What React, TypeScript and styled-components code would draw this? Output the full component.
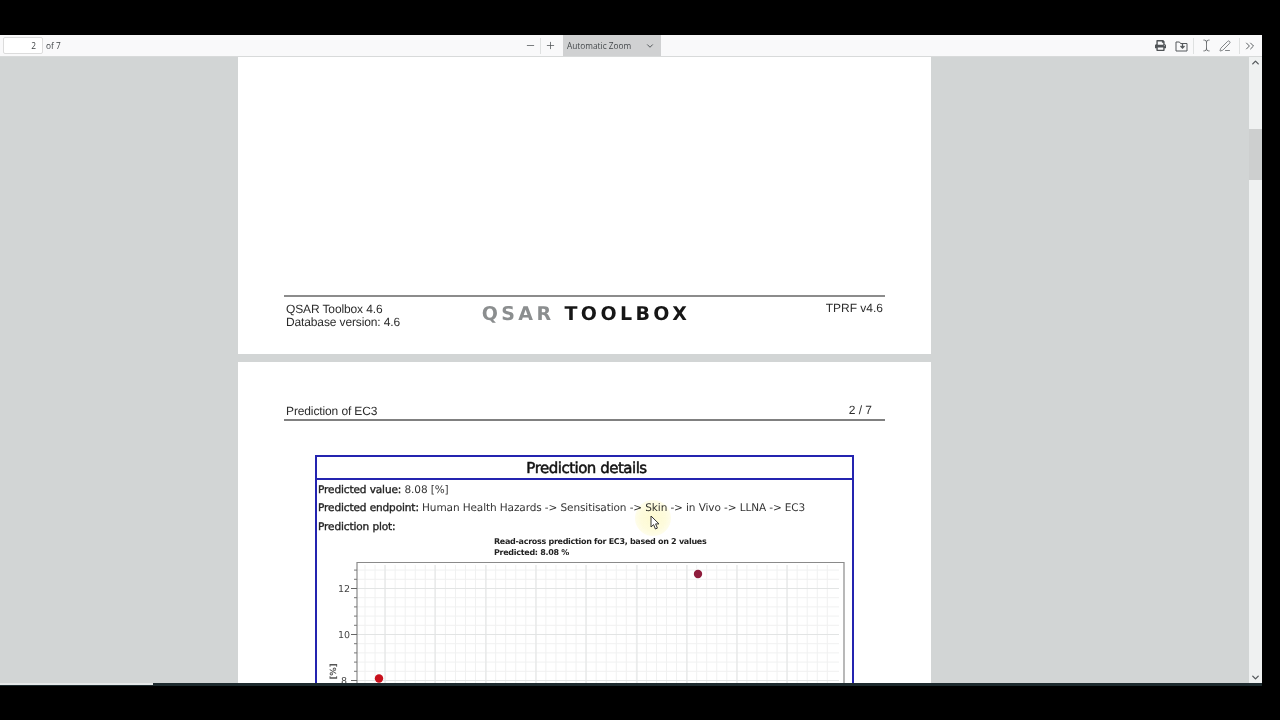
import React from 'react';
import styled, { createGlobalStyle } from 'styled-components';
import { ChevronDown, ChevronUp, ChevronsRight, Minus, PenLine, Plus, TextCursor } from 'lucide-react';
import { FaPrint } from 'react-icons/fa';

const GlobalStyle = createGlobalStyle`
  html, body {
    margin: 0;
    padding: 0;
    background: #000;
    overflow: hidden;
  }
`;

const range = (from: number, to: number, step: number) => {
  const out: number[] = [];
  for (let v = from; v <= to + 0.01; v += step) out.push(v);
  return out;
};

const Chart = () => (
  <ChartSvg viewBox="0 0 534 145" width="534" height="145">
    {range(48, 517, 10.05).map(x => (
      <line key={x} x1={x} x2={x} y1="4" y2="145" stroke="#f0f1f1" strokeWidth="1" />
    ))}
    {range(9.1, 145, 9.2).map(y => (
      <line key={y} x1="40" x2="522" y1={y} y2={y} stroke="#f0f1f1" strokeWidth="1" />
    ))}
    {[68, 118, 169, 219, 269, 320, 370, 420, 470].map(x => (
      <line key={x} x1={x} x2={x} y1="4" y2="145" stroke="#e2e4e4" strokeWidth="1" />
    ))}
    {[27.5, 73.5, 119.5].map(y => (
      <line key={y} x1="40" x2="522" y1={y} y2={y} stroke="#e2e4e4" strokeWidth="1" />
    ))}
    <path d="M40 145V1.500H527V145" fill="none" stroke="#8a8a8a" strokeWidth="1.2" />
    {range(9.1, 145, 9.2).map(y => (
      <line key={y} x1="37" x2="40" y1={y} y2={y} stroke="#777" strokeWidth="1" />
    ))}
    {[27.5, 73.5, 119.5].map(y => (
      <line key={y} x1="34" x2="40" y1={y} y2={y} stroke="#666" strokeWidth="1" />
    ))}
    <AxisText x="27" y="31" textAnchor="middle">12</AxisText>
    <AxisText x="27" y="77" textAnchor="middle">10</AxisText>
    <AxisText x="27" y="122.500" textAnchor="middle">8</AxisText>
    <AxisLabel transform="translate(19 139.500) rotate(-90)">EC3 [%]</AxisLabel>
    <circle cx="62" cy="117.500" r="4.2" fill="#c8101c" />
    <circle cx="381" cy="13" r="4.2" fill="#8e1c3c" />
  </ChartSvg>
);

const SaveIcon = () => (
  <svg width="13" height="12" viewBox="0 0 13 12" fill="none" stroke="#55595c" strokeWidth="1">
    <path d="M1 2h3.500l1 1.500H12V11H1z" />
    <path d="M7.500 3.500v4M5.500 6l2 2 2-2" strokeWidth="1.300" />
  </svg>
);

export default function App() {
  return (
    <>
      <GlobalStyle />
      <Screen>
        <TopBand />
        <Viewer>
          <Toolbar>
            <PagerGroup>
              <PageInput>2</PageInput>
              <PageCount>of 7</PageCount>
            </PagerGroup>
            <ZoomGroup>
              <ZoomButton><Minus size={11} strokeWidth={1.6} /></ZoomButton>
              <ToolDivider />
              <ZoomButton><Plus size={11} strokeWidth={1.6} /></ZoomButton>
              <ZoomSelect>
                Automatic Zoom
                <ChevronDown size={10} strokeWidth={2.4} color="#55595c" />
              </ZoomSelect>
            </ZoomGroup>
            <ToolsGroup>
              <ToolIcon><FaPrint size={11} /></ToolIcon>
              <ToolIcon $left={3}><SaveIcon /></ToolIcon>
              <ToolDivider $left={3} />
              <ToolIcon $left={3}><TextCursor size={13} strokeWidth={1.4} /></ToolIcon>
              <ToolIcon $left={1}><PenLine size={12} strokeWidth={1.4} /></ToolIcon>
              <ToolDivider $left={5} />
              <ToolIcon $left={1}><ChevronsRight size={14} strokeWidth={1.6} /></ToolIcon>
            </ToolsGroup>
          </Toolbar>
          <Workspace>
            <Pages>
              <FirstSheet>
                <SheetFooter>
                  <FooterInfo>
                    QSAR Toolbox 4.6
                    <br />
                    Database version: 4.6
                  </FooterInfo>
                  <Logo>
                    <LogoGrey>QSAR</LogoGrey> TOOLBOX
                  </Logo>
                  <FooterVersion>TPRF v4.6</FooterVersion>
                </SheetFooter>
              </FirstSheet>
              <SecondSheet>
                <SheetHeader>
                  <HeaderTitle>Prediction of EC3</HeaderTitle>
                  <PageNumber>2 / 7</PageNumber>
                </SheetHeader>
                <DetailsBox>
                  <DetailsTitle>Prediction details</DetailsTitle>
                  <DetailsBody>
                    <DetailRow>
                      <DetailKey>Predicted value:</DetailKey> 8.08 [%]
                    </DetailRow>
                    <DetailRow>
                      <DetailKey>Predicted endpoint:</DetailKey> Human Health Hazards -&gt; Sensitisation -&gt; Skin -&gt; in Vivo -&gt; LLNA -&gt; EC3
                    </DetailRow>
                    <DetailRow>
                      <DetailKey>Prediction plot:</DetailKey>
                    </DetailRow>
                    <ChartCaption>
                      Read-across prediction for EC3, based on 2 values
                      <br />
                      Predicted: 8.08 %
                    </ChartCaption>
                    <Chart />
                  </DetailsBody>
                </DetailsBox>
              </SecondSheet>
            </Pages>
            <ScrollTrack>
              <ChevronUp size={11} strokeWidth={3} color="#55595c" />
              <ScrollThumb />
              <ScrollRest />
              <ChevronDown size={11} strokeWidth={3} color="#55595c" />
            </ScrollTrack>
          </Workspace>
        </Viewer>
        <BottomEdge>
          <BottomLight />
        </BottomEdge>
        <Highlight />
        <Pointer width="11" height="15" viewBox="0 0 11 15">
          <path d="M1 1v11l2.600-2.400L5.400 14l2-.9-1.800-4.200H9z" fill="#fff" stroke="#333" strokeWidth="1" />
        </Pointer>
      </Screen>
    </>
  );
}

const Screen = styled.div`
  position: relative;
  width: 1280px;
  height: 720px;
  background: #000;
  overflow: hidden;
  filter: blur(0.35px);
`;

const TopBand = styled.div`
  height: 35px;
`;

const Viewer = styled.div`
  width: 1262px;
  height: 648px;
  display: flex;
  flex-direction: column;
  background: #d2d5d5;
`;

const Toolbar = styled.div`
  height: 22px;
  flex-shrink: 0;
  display: flex;
  align-items: center;
  background: #f9f9fa;
  border-bottom: 1px solid #d8dada;
  box-sizing: border-box;
  font-family: 'Open Sans', 'Liberation Sans', sans-serif;
  font-size: 8.300px;
  color: #3f4346;
`;

const PagerGroup = styled.div`
  width: 520px;
  flex-shrink: 0;
  display: flex;
  align-items: center;
  padding-left: 3px;
  box-sizing: border-box;
`;

const PageInput = styled.div`
  width: 40px;
  height: 17px;
  box-sizing: border-box;
  padding-right: 6px;
  background: #fff;
  border: 1px solid #dcdcdc;
  border-radius: 2px;
  text-align: right;
  line-height: 15px;
`;

const PageCount = styled.span`
  margin-left: 3px;
`;

const ZoomGroup = styled.div`
  display: flex;
  align-items: center;
  height: 100%;
`;

const ZoomButton = styled.div`
  width: 20px;
  display: flex;
  justify-content: center;
  color: #4a4e51;

  & + div + & {
    margin-left: -1px;
  }
`;

const ToolDivider = styled.div<{ $left?: number }>`
  width: 1px;
  height: 16px;
  margin-left: ${props => props.$left || 0}px;
  background: #dfe1e1;
`;

const ZoomSelect = styled.div`
  width: 98px;
  height: 21px;
  margin-left: 3px;
  padding: 0 6px 0 4px;
  box-sizing: border-box;
  display: flex;
  align-items: center;
  justify-content: space-between;
  background: #d0d1d2;
  color: #44484b;
`;

const ToolsGroup = styled.div`
  margin-left: auto;
  display: flex;
  align-items: center;
  padding-right: 3px;
  color: #4f5356;
`;

const ToolIcon = styled.div<{ $left?: number }>`
  width: 18px;
  margin-left: ${props => props.$left || 0}px;
  display: flex;
  justify-content: center;
`;

const Workspace = styled.div`
  flex: 1;
  min-height: 0;
  display: flex;
`;

const Pages = styled.div`
  flex: 1;
  min-width: 0;
  overflow: hidden;
  padding-left: 238px;
  font-family: 'Liberation Sans', Arial, sans-serif;
  color: #2c2c2c;
  text-rendering: geometricPrecision;
`;

const Sheet = styled.div`
  width: 693px;
  box-sizing: border-box;
  background: #fff;
  padding: 0 46px;
`;

const FirstSheet = styled(Sheet)`
  height: 297px;
  margin-bottom: 8px;
  display: flex;
  flex-direction: column;
  justify-content: flex-end;
`;

const SheetFooter = styled.div`
  height: 59px;
  box-sizing: border-box;
  border-top: 2px solid #8c8c8c;
  display: grid;
  grid-template-columns: 1fr auto 1fr;
  padding: 6px 2px 0;
  font-size: 12px;
  line-height: 13px;
`;

const FooterInfo = styled.div`
  letter-spacing: -0.13px;
`;

const Logo = styled.div`
  font-family: 'DejaVu Sans', sans-serif;
  font-weight: 700;
  font-size: 19px;
  line-height: 22px;
  letter-spacing: 3.400px;
  color: #161616;
  margin: 0 0 0 3px;
  white-space: pre;
`;

const LogoGrey = styled.span`
  color: #8b8e8f;
`;

const FooterVersion = styled.div`
  text-align: right;
  margin-top: -1px;
`;

const SecondSheet = styled(Sheet)`
  height: 400px;
  padding-top: 42px;
`;

const SheetHeader = styled.div`
  display: flex;
  justify-content: space-between;
  height: 15px;
  padding: 0 13px 0 2px;
  font-size: 12px;
  line-height: 14px;
  border-bottom: 2px solid #808080;
`;

const HeaderTitle = styled.span`
  letter-spacing: -0.12px;
`;

const PageNumber = styled.span`
  margin-top: -1px;
`;

const DetailsBox = styled.div`
  width: 539px;
  margin: 34px 0 0 31px;
  box-sizing: border-box;
  border: 2px solid #2424b0;
  border-bottom: 0;
  font-family: Tahoma, 'DejaVu Sans', sans-serif;
  color: #333;
`;

const DetailsTitle = styled.div`
  height: 23px;
  box-sizing: border-box;
  border-bottom: 2px solid #2424b0;
  padding-left: 4px;
  text-align: center;
  font-size: 15px;
  line-height: 23px;
  color: #111;
  letter-spacing: -0.5px;
  -webkit-text-stroke: 0.5px #111;
`;

const DetailsBody = styled.div`
  padding: 0.500px 0 0 1px;
`;

const DetailRow = styled.div`
  height: 18.500px;
  font-size: 10.500px;
  line-height: 18.500px;
  letter-spacing: -0.1px;
  white-space: nowrap;
`;

const DetailKey = styled.span`
  color: #222;
  -webkit-text-stroke: 0.35px #222;
`;

const ChartCaption = styled.div`
  margin-left: 176px;
  font-size: 8px;
  font-weight: 700;
  line-height: 11px;
  letter-spacing: -0.29px;
  color: #222;
  white-space: nowrap;
`;

const ChartSvg = styled.svg`
  display: block;
  margin: 2.500px 0 0 -1px;
`;

const AxisText = styled.text`
  font-family: 'DejaVu Sans', sans-serif;
  font-size: 9.500px;
  fill: #444;
`;

const AxisLabel = styled.text`
  font-family: 'DejaVu Sans', sans-serif;
  font-size: 8.500px;
  font-weight: 700;
  fill: #555;
`;

const ScrollTrack = styled.div`
  width: 13px;
  flex-shrink: 0;
  display: flex;
  flex-direction: column;
  align-items: center;
  background: #eff1f1;
`;

const ScrollThumb = styled.div`
  width: 100%;
  height: 51px;
  margin-top: 61px;
  background: #cdcfcf;
`;

const ScrollRest = styled.div`
  flex: 1;
`;

const BottomEdge = styled.div`
  width: 1262px;
  height: 3px;
  background: #1d2a2e;
`;

const BottomLight = styled.div`
  width: 153px;
  height: 2px;
  background: #e6e8e8;
`;

const Highlight = styled.div`
  position: absolute;
  left: 635px;
  top: 500px;
  width: 36px;
  height: 36px;
  border-radius: 50%;
  background: radial-gradient(circle, rgba(252, 246, 170, 0.55) 0%, rgba(252, 246, 170, 0.4) 50%, rgba(252, 246, 170, 0) 100%);
  mix-blend-mode: multiply;
`;

const Pointer = styled.svg`
  position: absolute;
  left: 650px;
  top: 515px;
`;
